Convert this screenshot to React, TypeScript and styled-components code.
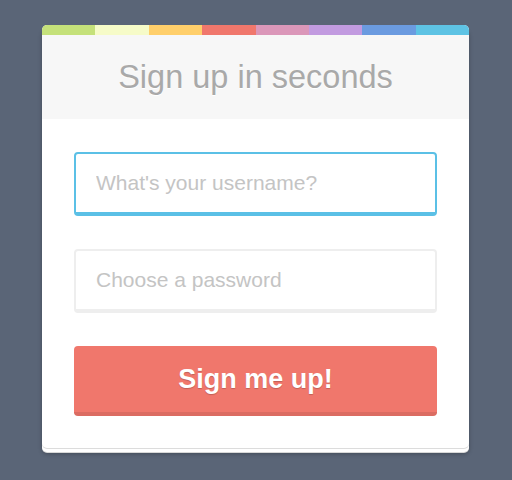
import React from 'react';
import styled, { createGlobalStyle } from 'styled-components';

const GlobalStyle = createGlobalStyle`
  html, body {
    margin: 0;
    padding: 0;
    background: #5a6577;
    font-family: "Liberation Sans", Arial, sans-serif;
  }
`;

const Page = styled.div`
  display: flex;
  padding: 25px 0 0 42px;
  min-height: 480px;
  box-sizing: border-box;
`;

const Card = styled.div`
  width: 427px;
  background: #fff;
  border-radius: 5px;
  overflow: hidden;
  box-shadow: 0 1px 0 #dcdcdc, 0 4px 0 #fff, 0 5px 0 #d8d8d8, 0 6px 4px rgba(0, 0, 0, 0.25);
  align-self: flex-start;
`;

const ColorBar = styled.div`
  display: flex;
  height: 10px;
`;

const Stripe = styled.div<{ $color: string }>`
  flex: 1;
  background: ${p => p.$color};
`;

const Header = styled.div`
  background: #f7f7f7;
  height: 84px;
  display: flex;
  align-items: center;
  justify-content: center;
`;

const Title = styled.h1`
  margin: 0;
  font-size: 32.5px;
  font-weight: normal;
  color: #a9a9a9;
  text-shadow: 0 1px 0 #fff;
`;

const Form = styled.form`
  display: flex;
  flex-direction: column;
  gap: 33px;
  padding: 33px 32px 32px;
`;

const Input = styled.input<{ $focused?: boolean }>`
  box-sizing: border-box;
  width: 100%;
  height: 64px;
  border: 2px solid ${p => (p.$focused ? '#5bc0e6' : '#eeeeee')};
  border-bottom-width: 4px;
  border-radius: 4px;
  padding: 0 20px;
  font-family: inherit;
  font-size: 21px;
  color: #555;
  outline: none;
  background: #fff;

  &::placeholder {
    color: #c4c4c4;
  }
`;

const Button = styled.button`
  height: 70px;
  border: none;
  border-bottom: 4px solid #db6c62;
  border-radius: 4px;
  background: #f0776c;
  color: #fff;
  font-family: inherit;
  font-size: 27px;
  font-weight: bold;
  text-shadow: 0 1px 1px rgba(0, 0, 0, 0.2);
  cursor: pointer;
`;

const colors = ['#c5e17a', '#f6fbc8', '#ffcf6b', '#f0776c', '#db97b9', '#c29be0', '#6b9be0', '#5ec3e4'];

export default function App() {
  return (
    <>
      <GlobalStyle />
      <Page>
        <Card>
          <ColorBar>
            {colors.map(c => (
              <Stripe key={c} $color={c} />
            ))}
          </ColorBar>
          <Header>
            <Title>Sign up in seconds</Title>
          </Header>
          <Form onSubmit={e => e.preventDefault()}>
            <Input $focused placeholder="What's your username?" />
            <Input type="password" placeholder="Choose a password" />
            <Button type="submit">Sign me up!</Button>
          </Form>
        </Card>
      </Page>
    </>
  );
}
